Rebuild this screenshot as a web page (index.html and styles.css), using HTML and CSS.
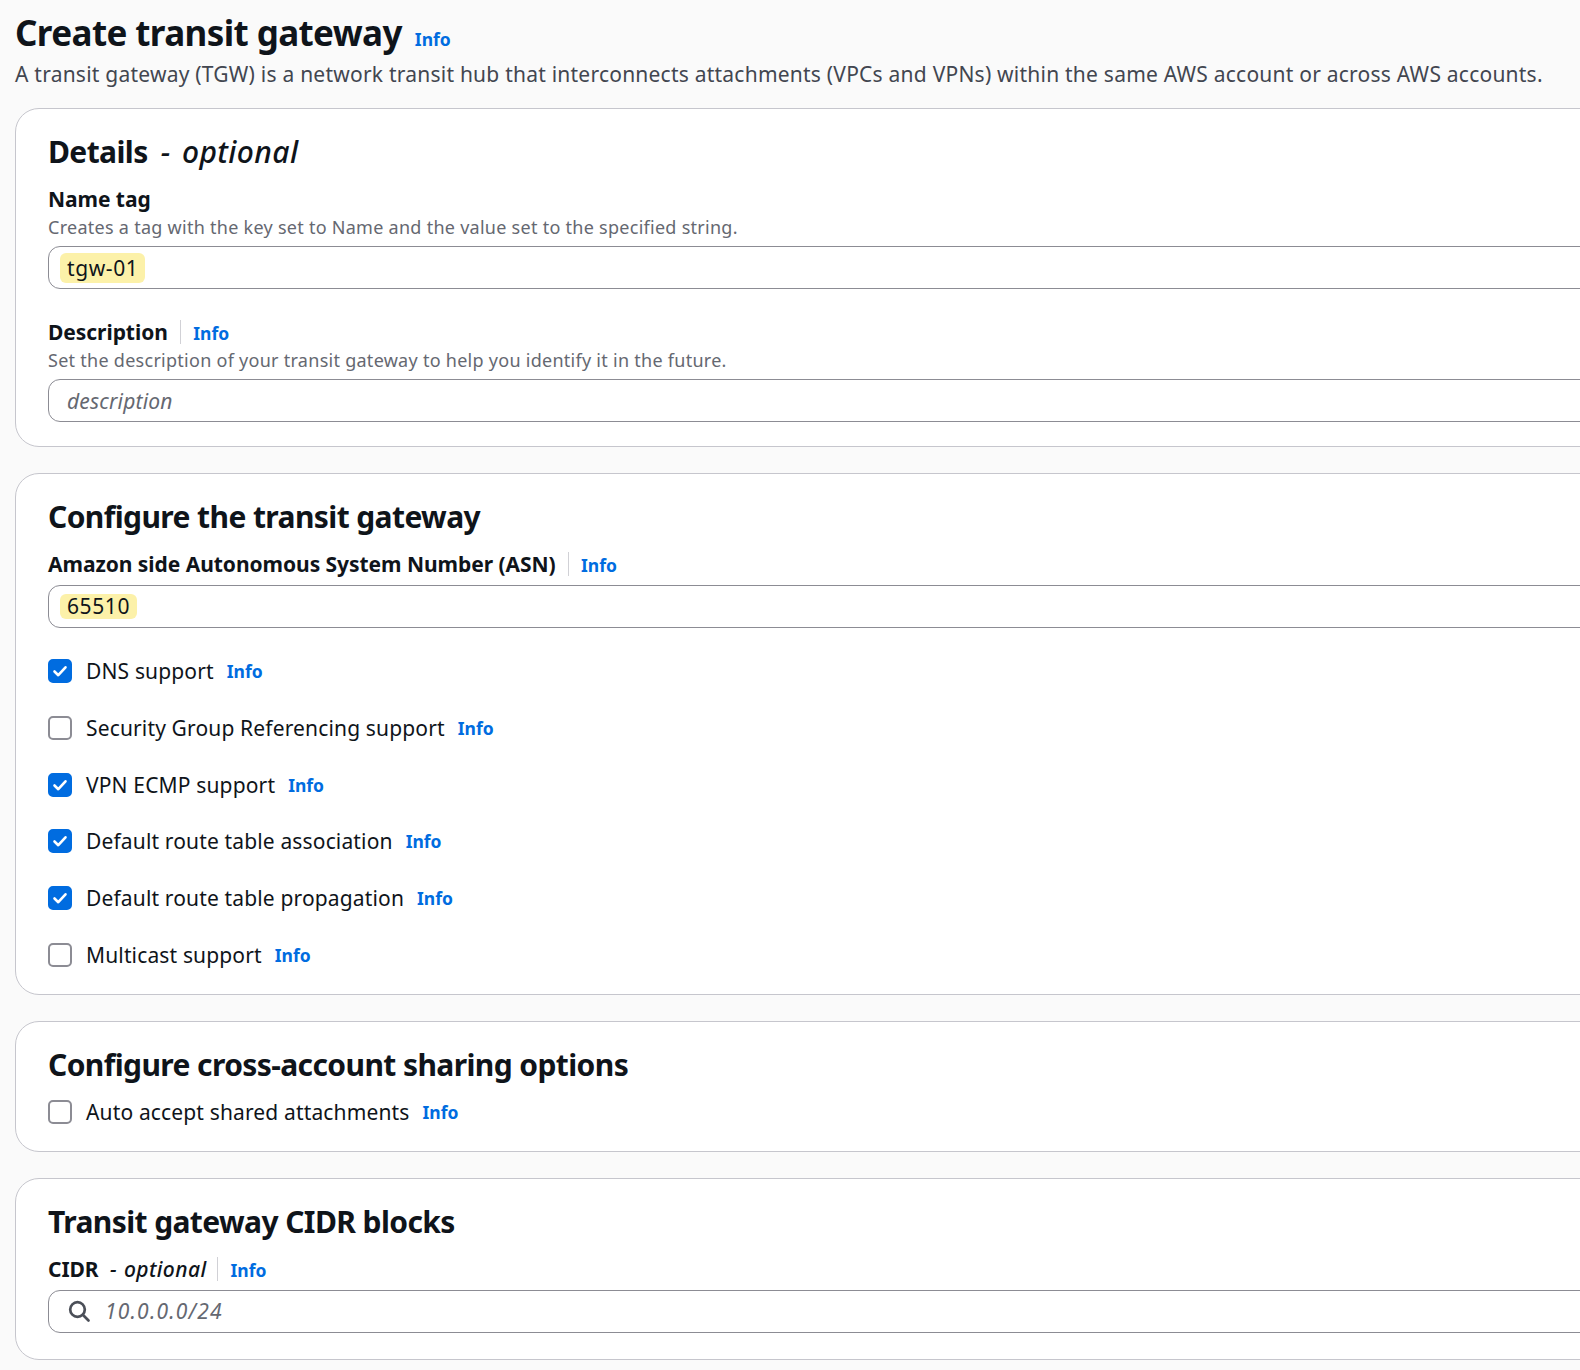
FILE: index.html
```html
<!DOCTYPE html>
<html lang="en">
<head>
    <meta charset="UTF-8">
    <meta name="viewport" content="width=device-width, initial-scale=1.0">
    <title>Create transit gateway</title>
    <link rel="stylesheet" href="styles.css">
</head>
<body>
    <div class="page">
        <header class="page-head">
            <h1>Create transit gateway <a class="info" href="#">Info</a></h1>
            <p class="lead">A transit gateway (TGW) is a network transit hub that interconnects attachments (VPCs and VPNs) within the same AWS account or across AWS accounts.</p>
        </header>

        <section class="card">
            <h2>Details <span class="opt">- optional</span></h2>
            <div class="field">
                <div class="label">Name tag</div>
                <div class="hint">Creates a tag with the key set to Name and the value set to the specified string.</div>
                <div class="input"><span class="mark">tgw-01</span></div>
            </div>
            <div class="field">
                <div class="label">Description <span class="sep"></span><a class="info" href="#">Info</a></div>
                <div class="hint">Set the description of your transit gateway to help you identify it in the future.</div>
                <div class="input"><span class="placeholder">description</span></div>
            </div>
        </section>

        <section class="card">
            <h2>Configure the transit gateway</h2>
            <div class="field">
                <div class="label">Amazon side Autonomous System Number (ASN) <span class="sep"></span><a class="info" href="#">Info</a></div>
                <div class="input"><span class="mark mark-sm">65510</span></div>
            </div>
            <div class="checks">
                <div class="check"><span class="box on"><svg viewBox="0 0 20 20"><polyline points="4.5,10.5 8.3,14.2 15.5,6.3"/></svg></span>DNS support <a class="info" href="#">Info</a></div>
                <div class="check"><span class="box"></span>Security Group Referencing support <a class="info" href="#">Info</a></div>
                <div class="check"><span class="box on"><svg viewBox="0 0 20 20"><polyline points="4.5,10.5 8.3,14.2 15.5,6.3"/></svg></span>VPN ECMP support <a class="info" href="#">Info</a></div>
                <div class="check"><span class="box on"><svg viewBox="0 0 20 20"><polyline points="4.5,10.5 8.3,14.2 15.5,6.3"/></svg></span>Default route table association <a class="info" href="#">Info</a></div>
                <div class="check"><span class="box on"><svg viewBox="0 0 20 20"><polyline points="4.5,10.5 8.3,14.2 15.5,6.3"/></svg></span>Default route table propagation <a class="info" href="#">Info</a></div>
                <div class="check"><span class="box"></span>Multicast support <a class="info" href="#">Info</a></div>
            </div>
        </section>

        <section class="card">
            <h2>Configure cross-account sharing options</h2>
            <div class="checks">
                <div class="check"><span class="box"></span>Auto accept shared attachments <a class="info" href="#">Info</a></div>
            </div>
        </section>

        <section class="card">
            <h2>Transit gateway CIDR blocks</h2>
            <div class="field">
                <div class="label">CIDR <span class="opt">- optional</span> <span class="sep"></span><a class="info" href="#">Info</a></div>
                <div class="input">
                    <svg class="search" viewBox="0 0 24 24"><circle cx="10.5" cy="10.5" r="7.3"/><line x1="15.8" y1="15.8" x2="21.5" y2="21.5"/></svg>
                    <span class="placeholder cidr">10.0.0.0/24</span>
                </div>
            </div>
        </section>
    </div>
</body>
</html>
```

FILE: styles.css
```css
body {
    margin: 0;
    background-color: #fafafa;
    font-family: "Noto Sans", "Open Sans", sans-serif;
    color: #0f141a;
    overflow: hidden;
}
.page {
    width: 1640px;
    padding: 10px 0 0 15px;
}
h1 {
    display: flex;
    align-items: baseline;
    margin: 0;
    font-size: 35px;
    line-height: 45px;
    font-weight: 700;
    letter-spacing: -0.6px;
}
h1 .info {
    margin-left: 13px;
    letter-spacing: 0;
}
.info {
    color: #006ce0;
    font-size: 17.5px;
    line-height: 22px;
    font-weight: 700;
    font-style: normal;
    text-decoration: none;
    letter-spacing: 0;
}
.lead {
    margin: 4px 0 0;
    font-size: 21px;
    line-height: 30px;
    color: #424650;
    letter-spacing: 0.23px;
}
.card {
    margin-top: 19px;
    background: white;
    border: 1px solid #c6c6cd;
    border-radius: 24px;
    padding: 23px 32px 24px;
}
.card + .card {
    margin-top: 26px;
}
.card:last-child {
    padding-bottom: 26px;
}
h2 {
    margin: 0 0 12px;
    font-size: 30px;
    line-height: 40px;
    font-weight: 700;
    letter-spacing: -0.6px;
}
.opt {
    font-style: italic;
    font-weight: 500;
    letter-spacing: 0.4px;
    word-spacing: 3px;
}
h2 .opt {
    margin-left: 6px;
}
.field + .field {
    margin-top: 28px;
}
.label {
    display: flex;
    align-items: baseline;
    font-size: 21px;
    line-height: 30px;
    font-weight: 700;
    letter-spacing: -0.05px;
    white-space: pre;
}
.sep {
    align-self: center;
    width: 1px;
    height: 24px;
    background: #d1d1d6;
    margin: 0 12px 0 7px;
}
.label .opt {
    margin: 0 4px 0 6px;
    word-spacing: 1px;
}
.hint {
    font-size: 18px;
    line-height: 26px;
    color: #656871;
    letter-spacing: 0.27px;
}
.input {
    display: flex;
    align-items: center;
    box-sizing: border-box;
    height: 43px;
    margin-top: 6px;
    padding: 0 18px;
    border: 1px solid #8c8c94;
    border-radius: 12px;
    background: white;
    font-size: 21px;
    letter-spacing: 0.6px;
}
.mark {
    display: inline-block;
    line-height: 30px;
    padding: 0 7px;
    margin-left: -7px;
    border-radius: 6px;
    background: #fcf1a9;
}
.mark-sm {
    line-height: 25px;
}
.placeholder {
    color: #656871;
    font-style: italic;
    letter-spacing: 0.2px;
}
.placeholder.cidr {
    letter-spacing: 1.2px;
}
.search {
    width: 24px;
    height: 24px;
    margin-right: 14px;
    fill: none;
    stroke: #4b4f58;
    stroke-width: 2.7;
    stroke-linecap: round;
}
.field + .checks {
    margin-top: 28px;
}
.checks {
    display: flex;
    flex-direction: column;
    gap: 26.8px;
}
.check {
    display: flex;
    align-items: center;
    height: 30px;
    font-size: 21px;
    letter-spacing: 0.15px;
}
.check .info {
    margin-left: 13px;
}
.box {
    box-sizing: border-box;
    width: 24px;
    height: 24px;
    margin-right: 14px;
    border: 2px solid #8c8c94;
    border-radius: 5px;
    background: white;
}
.box.on {
    border-color: #006ce0;
    background: #006ce0;
}
.box svg {
    display: block;
    width: 20px;
    height: 20px;
    fill: none;
    stroke: white;
    stroke-width: 2.6;
    stroke-linecap: round;
    stroke-linejoin: round;
}
```
